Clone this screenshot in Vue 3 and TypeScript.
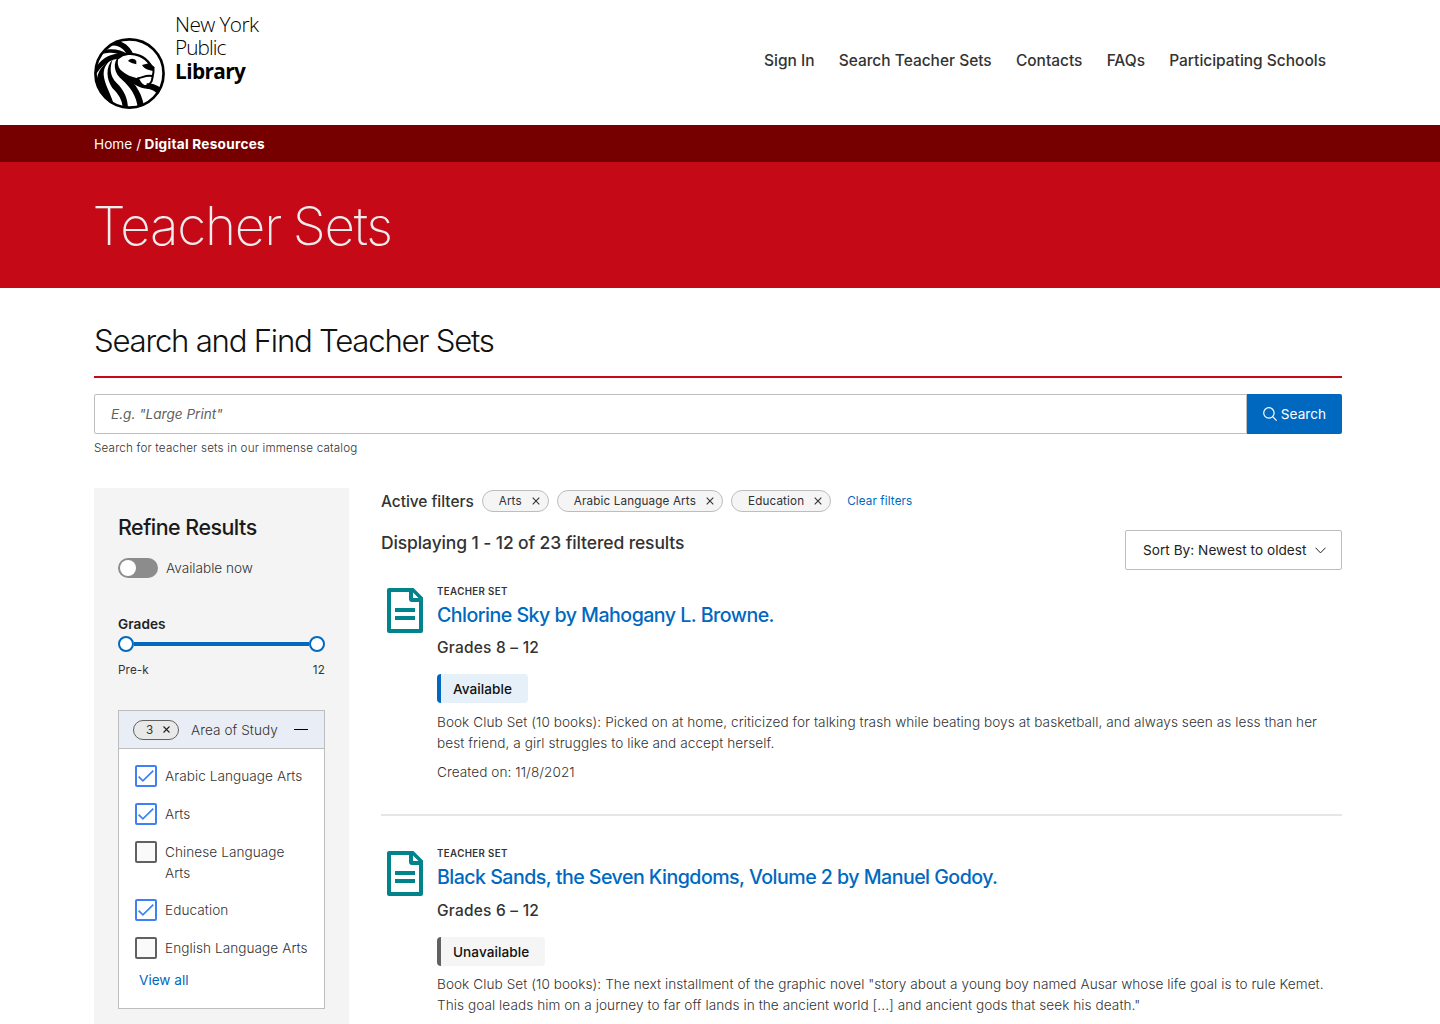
<script setup lang="ts">
import { ref, computed } from 'vue'

interface Subject { name: string; checked: boolean }
interface TeacherSet {
  title: string
  grades: string
  available: boolean
  description: string[]
  created?: string
}

const navLinks: string[] = ['Sign In', 'Search Teacher Sets', 'Contacts', 'FAQs', 'Participating Schools']

const subjects = ref<Subject[]>([
  { name: 'Arabic Language Arts', checked: true },
  { name: 'Arts', checked: true },
  { name: 'Chinese Language Arts', checked: false },
  { name: 'Education', checked: true },
  { name: 'English Language Arts', checked: false },
])
const checkedCount = computed(() => subjects.value.filter((s) => s.checked).length)

const activeFilters = ref<string[]>(['Arts', 'Arabic Language Arts', 'Education'])

const sets: TeacherSet[] = [
  {
    title: 'Chlorine Sky by Mahogany L. Browne.',
    grades: 'Grades 8 – 12',
    available: true,
    description: [
      'Book Club Set (10 books): Picked on at home, criticized for talking trash while beating boys at basketball, and always seen as less than her',
      'best friend, a girl struggles to like and accept herself.',
    ],
    created: '11/8/2021',
  },
  {
    title: 'Black Sands, the Seven Kingdoms, Volume 2 by Manuel Godoy.',
    grades: 'Grades 6 – 12',
    available: false,
    description: [
      'Book Club Set (10 books): The next installment of the graphic novel "story about a young boy named Ausar whose life goal is to rule Kemet.',
      'This goal leads him on a journey to far off lands in the ancient world [...] and ancient gods that seek his death."',
    ],
  },
]
</script>

<template>
  <div class="page">
    <header class="header">
      <a class="logo">
        <svg class="lion" viewBox="6 6 213 213" width="71" height="71" aria-hidden="true">
          <defs><clipPath id="lion-disc"><circle cx="112.500" cy="112.500" r="105" /></clipPath></defs>
          <circle cx="112.500" cy="112.500" r="102.200" fill="#fff" stroke="#000" stroke-width="8" />
          <g clip-path="url(#lion-disc)">
            <path d="M70 14C94 15 112 29 123 52L102 52C94 38 82 28 54 28Z" />
            <path d="M106 55C90 42 68 38 42 41L34 53C58 48 72 50 86 58Z" />
            <path d="M96 53C64 50 34 62 15 90L9 120C25 92 46 74 74 69Z" />
            <path d="M66 65C42 80 32 98 36 124C40 150 58 176 68 214L48 206C40 184 22 162 14 138C14 110 32 80 66 65Z" />
            <path d="M62 70C52 96 54 122 74 141C97 164 107 186 108 218L92 218C92 192 79 174 61 156C43 130 40 94 62 70Z" />
            <path d="M82 58C74 78 76 96 92 108C121 134 147 160 156 210L138 218C133 178 115 154 91 132C66 112 60 82 82 58Z" />
            <path d="M86 102C102 117 120 124 141 127C147 142 156 150 170 150L174 158C160 160 142 154 132 148C114 138 98 128 86 102Z" />
            <path d="M164 142C184 142 202 150 216 164L202 184C196 170 184 160 164 158Z" />
            <path d="M108 75C115 66 127 67 133 75L133 85L119 81Z" />
            <path d="M150 87L173 81L188 94L186 106C174 102 157 101 150 87Z" />
            <g fill="none" stroke="#000" stroke-linecap="round" stroke-linejoin="round">
              <path stroke-width="7" d="M78 66C94 52 120 50 142 59C158 65 168 76 175 86" />
              <path stroke-width="6" d="M184 100C186 110 182 116 182 123C179 130 182 136 175 141C171 149 160 153 150 148" />
              <path stroke-width="6" d="M138 127C150 126 162 116 180 120" />
            </g>
          </g>
        </svg>
        <span class="wordmark">
          <span class="wm-new">New York</span>
          <span class="wm-public">Public</span>
          <strong class="wm-library">Library</strong>
        </span>
      </a>
      <nav class="nav">
        <a v-for="link in navLinks" :key="link">{{ link }}</a>
      </nav>
    </header>

    <div class="breadcrumbs"><span>Home /</span><strong>Digital Resources</strong></div>
    <div class="hero"><h1>Teacher Sets</h1></div>

    <main class="content">
      <h2>Search and Find Teacher Sets</h2>
      <form class="search" @submit.prevent>
        <div class="search-input">E.g. "Large Print"</div>
        <button class="search-button">
          <svg width="14" height="14" viewBox="0 0 14 14" fill="none" stroke="#fff" stroke-width="1.200">
            <circle cx="5.900" cy="5.900" r="5.200" /><path d="M9.700 9.700L13.600 13.600" />
          </svg>
          <span>Search</span>
        </button>
      </form>
      <p class="helper">Search for teacher sets in our immense catalog</p>

      <div class="columns">
        <aside class="sidebar">
          <h3>Refine Results</h3>
          <div class="toggle-row"><span class="toggle"><i></i></span><span>Available now</span></div>
          <div class="slider-label">Grades</div>
          <div class="slider"><i></i><b></b><i></i></div>
          <div class="slider-range"><span>Pre-k</span><span>12</span></div>

          <section class="accordion">
            <div class="accordion-head">
              <span class="count">
                <span>{{ checkedCount }}</span>
                <svg width="7" height="7" viewBox="0 0 7 7" stroke="#222" stroke-width="1.100"><path d="M.5 .5L6.500 6.500M6.500 .5L.5 6.500" /></svg>
              </span>
              <span class="accordion-title">Area of Study</span>
              <i class="minus"></i>
            </div>
            <div class="accordion-body">
              <label v-for="s in subjects" :key="s.name" class="check-row" @click="s.checked = !s.checked">
                <span class="box" :class="{ checked: s.checked }">
                  <svg v-if="s.checked" width="16" height="12" viewBox="0 0 16 12" fill="none" stroke="#3f80f5" stroke-width="1.700"><path d="M.6 6.600L4.900 10.800L15.300 .7" /></svg>
                </span>
                <span class="check-text">{{ s.name }}</span>
              </label>
              <a class="view-all">View all</a>
            </div>
          </section>
        </aside>

        <section class="results">
          <div class="filters">
            <span class="filters-label">Active filters</span>
            <span v-for="f in activeFilters" :key="f" class="chip">
              <span>{{ f }}</span>
              <svg width="8" height="8" viewBox="0 0 8 8" stroke="#333" stroke-width="1.100"><path d="M.7 .7L7.300 7.300M7.300 .7L.7 7.300" /></svg>
            </span>
            <a class="clear">Clear filters</a>
          </div>
          <div class="summary">
            <div class="count-text">Displaying 1 - 12 of 23 filtered results</div>
            <div class="sort">
              <span>Sort By: Newest to oldest</span>
              <svg width="11" height="7" viewBox="0 0 11 7" fill="none" stroke="#222" stroke-width="1"><path d="M.5 .7L5.500 5.900L10.500 .7" /></svg>
            </div>
          </div>

          <article v-for="set in sets" :key="set.title" class="card">
            <svg class="doc" width="36" height="45" viewBox="0 0 36 45" aria-hidden="true">
              <path fill="#00838a" fill-rule="evenodd" d="M2 0H26.500L36 9.500V43A2 2 0 0 1 34 45H2A2 2 0 0 1 0 43V2A2 2 0 0 1 2 0ZM4 4V41H32V14H25A3 3 0 0 1 22 11V4ZM26 4.500V10H31.500Z" />
              <path fill="#00838a" d="M8 20H28V24H8ZM8 28H28V32H8Z" />
            </svg>
            <div class="card-body">
              <div class="overline">TEACHER SET</div>
              <h4>{{ set.title }}</h4>
              <div class="grades">{{ set.grades }}</div>
              <div class="badge" :class="{ off: !set.available }">{{ set.available ? 'Available' : 'Unavailable' }}</div>
              <p class="desc"><span v-for="line in set.description" :key="line">{{ line }}</span></p>
              <p v-if="set.created" class="created">Created on: {{ set.created }}</p>
            </div>
          </article>
        </section>
      </div>
    </main>
  </div>
</template>

<style>
body { overflow: hidden; }
</style>

<style scoped>
.page { width: 1440px; height: 1024px; overflow: hidden; background: #fff; color: #333; font-family: Inter, "Liberation Sans", sans-serif; font-size: 13.6px; letter-spacing: 0.06px; box-sizing: border-box; }
.page * { box-sizing: border-box; }
h1, h2, h3, h4, p { margin: 0; }
span, a, strong, h1, h2, h4 { white-space: nowrap; }

.header { display: flex; justify-content: space-between; align-items: flex-start; height: 125px; padding: 0 114px 0 94px; }
.logo { display: flex; gap: 10px; }
.lion { margin-top: 38px; display: block; }
.wordmark { display: flex; flex-direction: column; margin-top: 13px; font-family: "Open Sans", sans-serif; font-size: 20.8px; line-height: 23.3px; color: #000; font-weight: 300; }
.wm-new { letter-spacing: -0.6px; }
.wm-public { letter-spacing: -0.95px; }
.wm-library { font-weight: 700; letter-spacing: -0.6px; }
.nav { display: flex; gap: 24.2px; margin-top: 49px; font-size: 15.5px; line-height: 24px; font-weight: 500; letter-spacing: -0.01px; }

.breadcrumbs { height: 37px; padding-left: 94px; background: #760000; color: #fff; display: flex; gap: 3.4px; align-items: center; }
.breadcrumbs strong { letter-spacing: 0.27px; }
.hero { height: 126px; padding: 32px 0 0 92.5px; background: #c60917; }
h1 { font-size: 53px; line-height: 64px; font-weight: 240; letter-spacing: -1.25px; word-spacing: -2px; color: #ededed; }

.content { width: 1248px; margin-left: 94px; padding-top: 32px; }
h2 { height: 58px; border-bottom: 2px solid #c60917; font-size: 31.2px; line-height: 42px; font-weight: 340; letter-spacing: -1.25px; color: #111; }
.search { display: flex; height: 40px; margin-top: 16px; }
.search-input { flex: 1; border: 1px solid #bdbdbd; border-radius: 2px 0 0 2px; padding-left: 16px; line-height: 38px; font-style: italic; letter-spacing: 0; color: #616161; }
.search-button { width: 95px; border: 0; padding: 0; border-radius: 0 2px 2px 0; background: #0069bf; color: #fff; font: inherit; letter-spacing: inherit; display: flex; align-items: center; justify-content: center; gap: 4px; }
.helper { margin-top: 5px; font-size: 11.65px; line-height: 18px; font-weight: 350; letter-spacing: 0.18px; }

.columns { display: flex; gap: 32px; margin-top: 31px; }
.sidebar { width: 255px; height: 700px; padding: 24px; background: #f4f4f4; flex: none; }
h3 { font-size: 21.4px; line-height: 30px; font-weight: 500; letter-spacing: -0.5px; color: #1a1a1a; white-space: nowrap; }
.toggle-row { display: flex; align-items: center; gap: 8px; height: 20px; margin-top: 16px; font-weight: 300; letter-spacing: 0; }
.toggle { width: 40px; height: 20px; border-radius: 10px; background: #8c8c8c; padding: 2px; }
.toggle i { display: block; width: 16px; height: 16px; border-radius: 50%; background: #fff; }
.slider-label { margin-top: 36px; line-height: 21px; font-weight: 600; color: #222; }
.slider { display: flex; align-items: center; height: 16px; margin-top: 1px; }
.slider i { width: 16px; height: 16px; border: 2px solid #0069bf; border-radius: 50%; background: #fff; }
.slider b { flex: 1; height: 4px; background: #0069bf; }
.slider-range { display: flex; justify-content: space-between; margin-top: 9px; font-size: 11.65px; line-height: 18px; letter-spacing: 0.15px; }

.accordion { height: 299px; margin-top: 31px; border: 1px solid #bdbdbd; background: #fff; }
.accordion-head { display: flex; align-items: center; height: 38px; padding: 0 16px 0 14px; background: #e9edf5; border-bottom: 1px solid #bdbdbd; }
.count { width: 46px; height: 20px; border: 1px solid #616161; border-radius: 10px; background: #e9e9e9; display: flex; align-items: center; padding-left: 12px; gap: 10px; font-size: 11.65px; }
.accordion-title { margin-left: 12px; font-weight: 350; letter-spacing: 0.06px; }
.minus { width: 14px; height: 1.5px; margin-left: auto; background: #000; }
.accordion-body { display: flex; flex-direction: column; padding: 16px 16px 0; }
.check-row { display: flex; gap: 8px; margin-bottom: 16px; font-weight: 300; line-height: 21px; }
.box { flex: none; width: 22px; height: 22px; border: 2px solid #616161; border-radius: 2px; background: #fafafa; display: flex; align-items: center; justify-content: center; }
.box.checked { border-color: #3f80f5; background: #fff; }
.check-text { white-space: normal; padding-top: 1px; margin-bottom: -1px; }
.view-all { margin-left: 4px; margin-top: -5px; line-height: 21px; letter-spacing: 0; color: #0069bf; }

.results { flex: 1; }
.filters { display: flex; align-items: center; height: 26px; gap: 8px; font-size: 11.65px; }
.filters-label { font-size: 15.5px; font-weight: 500; letter-spacing: -0.05px; }
.chip { display: flex; align-items: center; gap: 10px; height: 22px; padding: 0 8px 0 16px; border: 1px solid #bdbdbd; border-radius: 11px; background: #f5f5f5; letter-spacing: 0.16px; }
.clear { margin-left: 8px; color: #0069bf; letter-spacing: 0.12px; }
.summary { display: flex; justify-content: space-between; margin-top: 16px; height: 40px; }
.count-text { margin-top: 1px; font-size: 17.5px; line-height: 24px; font-weight: 500; letter-spacing: -0.12px; }
.sort { width: 217px; height: 40px; border: 1px solid #bdbdbd; border-radius: 2px; display: flex; align-items: center; padding-left: 17px; gap: 8px; letter-spacing: 0.04px; color: #222; }

.card { display: flex; height: 246px; margin-bottom: 16.5px; padding: 13px 0 0 6px; border-bottom: 2px solid #e6e6e6; }
.doc { flex: none; margin-top: 5px; }
.card-body { margin-left: 14px; }
.overline { margin-top: 0.6px; margin-bottom: -0.6px; font-size: 9.7px; line-height: 16px; font-weight: 600; letter-spacing: 0.4px; }
h4 { margin-top: 1.7px; font-size: 19.6px; line-height: 28px; font-weight: 500; letter-spacing: -0.53px; color: #0069bf; }
.grades { margin-top: 7.8px; margin-bottom: -1px; font-size: 15.5px; line-height: 24px; font-weight: 500; letter-spacing: 0.22px; }
.badge { width: max-content; height: 29px; margin-top: 15px; padding: 0 16px 0 12px; border-left: 4px solid #0069bf; border-radius: 4px; background: #e6f0f9; line-height: 30px; font-weight: 500; color: #111; }
.badge.off { border-left-color: #616161; background: #f5f5f5; }
.desc { margin-top: 8.1px; line-height: 21px; font-weight: 300; }
.desc span { display: block; }
.created { margin-top: 8px; line-height: 21px; font-weight: 300; }
</style>
